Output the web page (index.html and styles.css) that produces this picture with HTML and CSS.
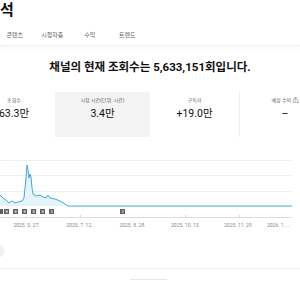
FILE: index.html
```html
<!DOCTYPE html>
<html lang="ko">
<head>
<meta charset="utf-8">
<link rel="stylesheet" href="styles.css">
</head>
<body>
<header class="top">
  <h1 class="title">석</h1>
  <nav class="tabs">
    <span>콘텐츠</span>
    <span>시청자층</span>
    <span>수익</span>
    <span>트렌드</span>
  </nav>
</header>
<main>
  <h2 class="headline">채널의 현재 조회수는 5,633,151회입니다.</h2>
  <div class="cards">
    <div class="card"><div class="label">조회수</div><div class="value">63.3만</div></div>
    <div class="card active"><div class="label">시청 시간(단위: 시간)</div><div class="value">3.4만</div></div>
    <div class="card divided"><div class="label">구독자</div><div class="value">+19.0만</div></div>
    <div class="card"><div class="label">예상 수익 <span class="warn">⚠</span></div><div class="value">–</div></div>
  </div>
  <svg class="chart" width="292" height="71" viewBox="0 0 292 71">
    <g stroke="#efefef" stroke-width="1">
      <line x1="0" y1="12.5" x2="292" y2="12.5"/>
      <line x1="0" y1="27.5" x2="292" y2="27.5"/>
      <line x1="0" y1="43.5" x2="292" y2="43.5"/>
    </g>
    <path d="M0 47 L3 50 L6 52 L9 55 L12 53 L15 55 L18 54 L22 53 L24 50 L26 30 L27 17 L28 22 L29 30 L30 26 L31 29 L32 40 L33 46 L36 48 L40 47 L43 49 L46 50 L48 47 L50 50 L55 51 L60 53 L65 56 L68 58 L292 58 L292 58 L0 58 Z" fill="#e4f4fb"/>
    <path d="M0 47 L3 50 L6 52 L9 55 L12 53 L15 55 L18 54 L22 53 L24 50 L26 30 L27 17 L28 22 L29 30 L30 26 L31 29 L32 40 L33 46 L36 48 L40 47 L43 49 L46 50 L48 47 L50 50 L55 51 L60 53 L65 56 L68 58 L292 58" fill="none" stroke="#41a9da" stroke-width="1"/>
    <g fill="#5f5f5f">
      <rect x="-2" y="61" width="5" height="5"/>
      <rect x="4" y="61" width="5" height="5"/>
      <rect x="13" y="61" width="5" height="5"/>
      <rect x="22" y="61" width="5" height="5"/>
      <rect x="31" y="61" width="5" height="5"/>
      <rect x="40" y="61" width="5" height="5"/>
      <rect x="49" y="61" width="5" height="5"/>
      <rect x="120" y="61" width="5" height="5"/>
    </g>
    <g fill="#fff" font-size="4" font-family="Roboto, sans-serif" text-anchor="middle">
      <text x="6.5" y="65">8</text>
      <text x="15.5" y="65">8</text>
      <text x="24.5" y="65">8</text>
      <text x="33.5" y="65">8</text>
      <text x="42.5" y="65">8</text>
      <text x="51.5" y="65">5</text>
      <text x="122.5" y="65">3</text>
    </g>
    <line x1="0" y1="69.5" x2="292" y2="69.5" stroke="#dcdcdc" stroke-width="1"/>
    <g stroke="#dcdcdc" stroke-width="1">
      <line x1="80.5" y1="67" x2="80.5" y2="70"/>
      <line x1="185.5" y1="67" x2="185.5" y2="70"/>
      <line x1="239.5" y1="67" x2="239.5" y2="70"/>
    </g>
  </svg>
  <div class="axis">
    <span>2025. 5. 27.</span>
    <span>2025. 7. 12.</span>
    <span>2025. 8. 28.</span>
    <span>2025. 10. 13.</span>
    <span>2025. 11. 29.</span>
    <span class="last">2026. 1. …</span>
  </div>
  <div class="footer">
    <div class="circle"></div>
    <div class="rule"></div>
    <div class="handle"></div>
  </div>
</main>
</body>
</html>
```
FILE: styles.css
```css
html, body {
  margin: 0;
  padding: 0;
}
body {
  width: 300px;
  height: 300px;
  overflow: hidden;
  background: #fff;
  color: #0f0f0f;
  font-family: Roboto, "Noto Sans CJK KR", sans-serif;
}
.top {
  height: 45px;
  border-bottom: 1px solid #f1f1f1;
  box-shadow: 0 3px 3px rgba(0, 0, 0, 0.025);
}
.title {
  margin: 0;
  padding-top: 2px;
  font-size: 15px;
  font-weight: 700;
  line-height: 17px;
}
.tabs {
  display: grid;
  grid-template-columns: repeat(4, 37.5px);
  margin: 10.5px 0 0 -4px;
  font-size: 6px;
  line-height: 10px;
  color: #606060;
  text-align: center;
}
.headline {
  margin: 14px 0 0;
  font-size: 11.5px;
  line-height: 14px;
  font-weight: 700;
  text-align: center;
}
.cards {
  display: grid;
  grid-template-columns: 82px 95px 90px 90px;
  margin: 18px 0 0 -27px;
  height: 45px;
}
.card {
  text-align: center;
  padding-top: 5px;
}
.card.active {
  background: #f3f3f3;
}
.card.divided {
  border-right: 1px solid #eeeeee;
}
.label {
  font-size: 5px;
  line-height: 6px;
  color: #606060;
}
.warn {
  font-size: 6px;
  color: #444;
}
.value {
  margin-top: 5px;
  font-size: 10.5px;
  line-height: 12px;
  color: #0f0f0f;
}
.chart {
  display: block;
  margin-top: 11px;
}
.axis {
  display: flex;
  width: 292px;
  margin-top: 3px;
  font-size: 5px;
  line-height: 7px;
  color: #8a8a8a;
}
.axis span {
  width: 53px;
  flex: none;
  text-align: center;
  white-space: nowrap;
}
.axis .last {
  width: auto;
  padding-left: 2px;
  text-align: left;
}
.footer {
  margin-top: 14.5px;
}
.circle {
  width: 14px;
  height: 14px;
  margin-left: -10px;
  border-radius: 50%;
  background: #efefef;
}
.rule {
  margin-top: 10px;
  height: 1px;
  background: #f1f1f1;
}
.handle {
  margin: 10px 0 0 130px;
  width: 37px;
  height: 1px;
  background: #e6e6e6;
}
```
